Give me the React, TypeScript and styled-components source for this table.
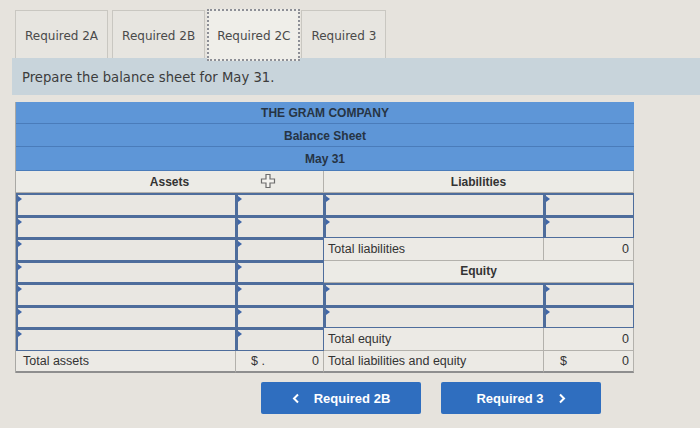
import React from "react";
import styled, { createGlobalStyle, css } from "styled-components";

const Global = createGlobalStyle`
  html, body { margin: 0; padding: 0; }
  body {
    background: #e6e3dd;
    width: 700px;
    height: 428px;
    overflow: hidden;
    font-family: "DejaVu Sans", Verdana, sans-serif;
  }
`;

const Page = styled.div`
  display: flex;
  flex-direction: column;
  padding-top: 10px;
`;

const TabRow = styled.div`
  display: flex;
  align-items: flex-end;
  margin-left: 15px;
  height: 48px;
`;

const Tab = styled.div<{ $active?: boolean; $gap: number }>`
  box-sizing: border-box;
  height: ${(p) => (p.$active ? 52 : 48)}px;
  margin-bottom: ${(p) => (p.$active ? -3 : 0)}px;
  margin-right: ${(p) => p.$gap}px;
  padding: 2px 9px 0;
  display: flex;
  align-items: center;
  font-size: 12px;
  color: #4a4a4a;
  background: ${(p) => (p.$active ? "#efeee9" : "#e7e5e0")};
  border: 1px solid #c9c7c1;
  border-bottom: none;
  position: relative;
  z-index: ${(p) => (p.$active ? 2 : 0)};
  ${(p) =>
    p.$active &&
    css`
      border: 2px dotted #8d8f96;
      padding: 2px 8px 0;
    `}
`;

const PromptBar = styled.div`
  margin-left: 12px;
  height: 37px;
  background: #c8d4db;
  display: flex;
  align-items: center;
  padding: 2px 0 0 10px;
  box-sizing: border-box;
  font-size: 13.2px;
  color: #3c3c3c;
  position: relative;
  z-index: 1;
`;

const TableWrap = styled.div`
  position: relative;
  margin: 7px 0 0 15px;
  width: 618px;
`;

const Table = styled.div`
  display: grid;
  grid-template-columns: 220px 88px 220px 90px;
  grid-template-rows: 22px 23px 24px 22px repeat(8, 22.5px);
  font-family: "Liberation Sans", Arial, sans-serif;
  font-size: 12.5px;
  color: #333;
  border-left: 1px solid #a9a8a4;
  border-right: 1px solid #a9a8a4;
`;

const TitleRow = styled.div`
  grid-column: 1 / span 4;
  background: #5e96d7;
  border-bottom: 1px solid #4a7cba;
  display: flex;
  align-items: center;
  justify-content: center;
  padding-top: 1px;
  font-weight: bold;
  font-size: 12px;
  color: #263444;
`;

const SectionHead = styled.div`
  grid-column: span 2;
  background: #ecebe6;
  border-bottom: 1px solid #b3b1ac;
  border-right: 1px solid #b3b1ac;
  display: flex;
  align-items: center;
  justify-content: center;
  font-weight: bold;
  font-size: 12px;
  color: #333;
`;

const InputCell = styled.div`
  box-sizing: border-box;
  background: #e9e7e2;
  border-top: 2px solid #4e6d9c;
  border-left: 2px solid #4e6d9c;
  border-right: 1px solid #4e6d9c;
  border-bottom: 1px solid #4e6d9c;
  position: relative;
  &::before {
    content: "";
    position: absolute;
    left: 0;
    top: 1px;
    border-left: 4px solid #3f66a8;
    border-top: 3px solid transparent;
    border-bottom: 3px solid transparent;
  }
`;

const TextCell = styled.div<{ $align?: "left" | "right" | "split"; $total?: boolean; $pad?: number }>`
  box-sizing: border-box;
  background: #eceae5;
  border-right: 1px solid #b3b1ac;
  border-bottom: ${(p) => (p.$total ? "2px solid #8e8e8e" : "1px solid #b3b1ac")};
  display: flex;
  align-items: center;
  padding: 0 4px 0 ${(p) => p.$pad ?? 4}px;
  justify-content: ${(p) =>
    p.$align === "right" ? "flex-end" : p.$align === "split" ? "space-between" : "flex-start"};
`;

const Dollar = styled.span<{ $indent: number }>`
  padding-left: ${(p) => p.$indent}px;
`;

const Cursor = styled.svg`
  position: absolute;
  left: 245px;
  top: 71px;
`;

const ButtonRow = styled.div`
  display: flex;
  gap: 20px;
  margin: 9px 0 0 261px;
`;

const NavButton = styled.div`
  box-sizing: border-box;
  width: 160px;
  height: 32px;
  background: #2f6ebf;
  border-radius: 2px;
  display: flex;
  align-items: center;
  justify-content: center;
  gap: 14px;
  font-family: "Liberation Sans", Arial, sans-serif;
  font-weight: bold;
  font-size: 13px;
  color: #ffffff;
`;

const Chevron = styled.svg`
  display: block;
`;

const ChevronIcon = ({ dir }: { dir: "left" | "right" }) => (
  <Chevron width="8" height="11" viewBox="0 0 8 11">
    <path
      d={dir === "left" ? "M6 1.5 L2 5.5 L6 9.5" : "M2 1.5 L6 5.5 L2 9.5"}
      fill="none"
      stroke="#fff"
      strokeWidth="2"
    />
  </Chevron>
);

const tabs = [
  { label: "Required 2A", gap: 4 },
  { label: "Required 2B", gap: 2 },
  { label: "Required 2C", gap: 1, active: true },
  { label: "Required 3", gap: 0 },
];

export default function App() {
  return (
    <>
      <Global />
      <Page>
        <TabRow>
          {tabs.map((t) => (
            <Tab key={t.label} $active={t.active} $gap={t.gap}>
              {t.label}
            </Tab>
          ))}
        </TabRow>
        <PromptBar>Prepare the balance sheet for May 31.</PromptBar>
        <TableWrap>
          <Table>
            <TitleRow>THE GRAM COMPANY</TitleRow>
            <TitleRow>Balance Sheet</TitleRow>
            <TitleRow>May 31</TitleRow>

            <SectionHead>Assets</SectionHead>
            <SectionHead>Liabilities</SectionHead>

            <InputCell /><InputCell /><InputCell /><InputCell />
            <InputCell /><InputCell /><InputCell /><InputCell />

            <InputCell /><InputCell />
            <TextCell>Total liabilities</TextCell>
            <TextCell $align="right">0</TextCell>

            <InputCell /><InputCell />
            <SectionHead>Equity</SectionHead>

            <InputCell /><InputCell /><InputCell /><InputCell />
            <InputCell /><InputCell /><InputCell /><InputCell />

            <InputCell /><InputCell />
            <TextCell>Total equity</TextCell>
            <TextCell $align="right">0</TextCell>

            <TextCell $total $pad={7}>Total assets</TextCell>
            <TextCell $total $align="split">
              <Dollar $indent={11}>$ .</Dollar>
              <span>0</span>
            </TextCell>
            <TextCell $total>Total liabilities and equity</TextCell>
            <TextCell $total $align="split">
              <Dollar $indent={12}>$</Dollar>
              <span>0</span>
            </TextCell>
          </Table>
          <Cursor width="16" height="16" viewBox="0 0 16 16">
            <path
              d="M6 1.5 H10 V6 H14.5 V10 H10 V14.5 H6 V10 H1.5 V6 H6 Z"
              fill="#f4f3ef"
              stroke="#6d6d6d"
              strokeWidth="1.2"
            />
          </Cursor>
        </TableWrap>
        <ButtonRow>
          <NavButton>
            <ChevronIcon dir="left" />
            <span>Required 2B</span>
          </NavButton>
          <NavButton>
            <span>Required 3</span>
            <ChevronIcon dir="right" />
          </NavButton>
        </ButtonRow>
      </Page>
    </>
  );
}
